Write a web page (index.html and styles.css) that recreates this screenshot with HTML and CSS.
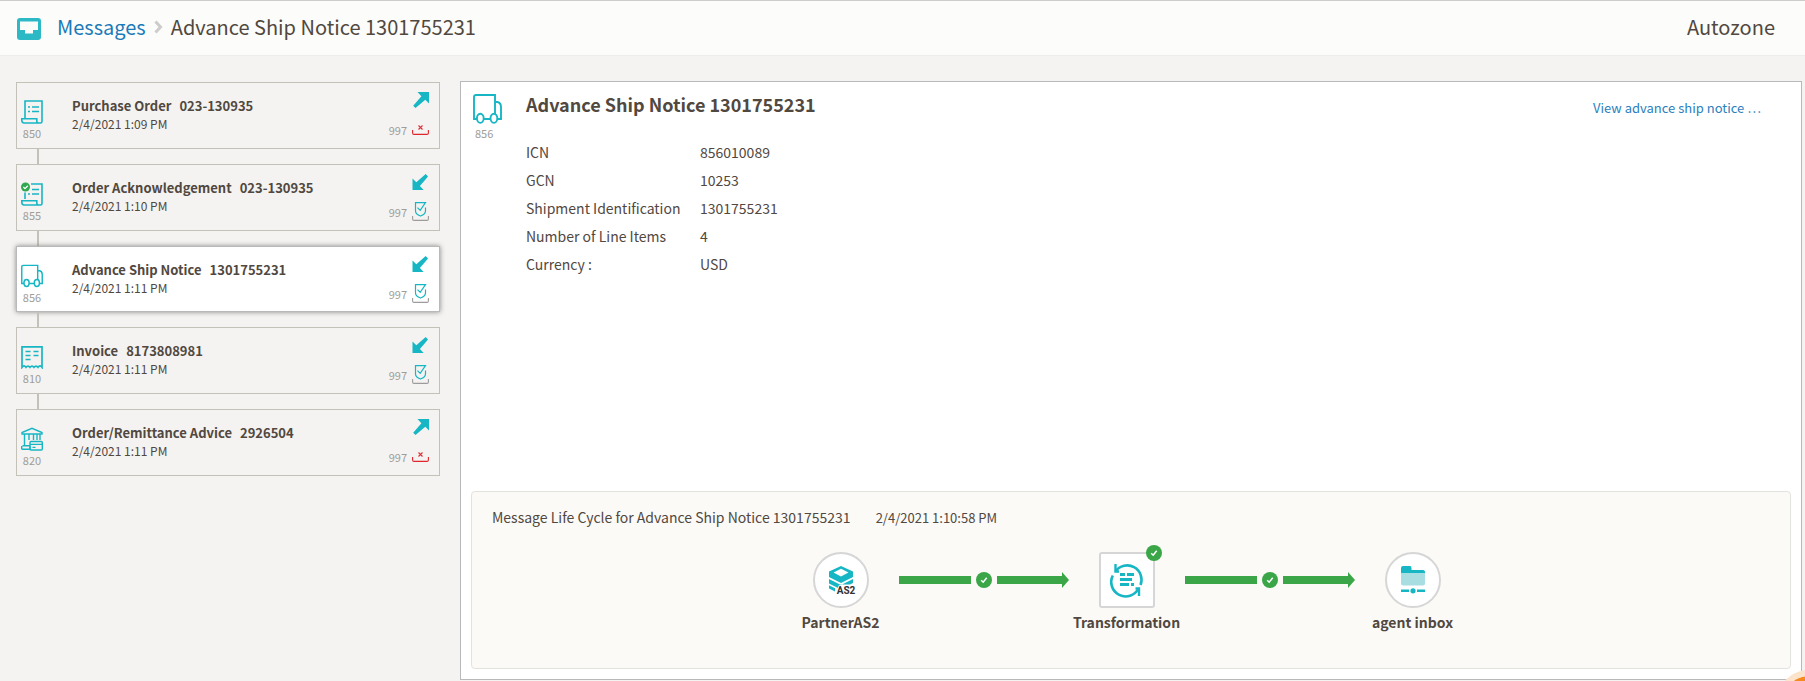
FILE: index.html
```html
<!DOCTYPE html>
<html lang="en">
<head>
<meta charset="utf-8">
<title>Advance Ship Notice 1301755231</title>
<link rel="stylesheet" href="styles.css">
</head>
<body>
<svg class="sprite" aria-hidden="true">
  <symbol id="doc" viewBox="0 0 22 24">
    <path d="M4 18V1h17v20.500q0 1.500-1.500 1.500H3q-2.200 0-2.200-3v-1.300h15V21q0 2 2 2" fill="none" stroke="currentColor" stroke-width="1.600"/>
    <path d="M7 7h2M11 7h7M7 11.500h2M11 11.500h7" stroke="currentColor" stroke-width="1.400"/>
  </symbol>
  <symbol id="doc-check" viewBox="0 0 22 24">
    <path d="M10 2h11v19.500q0 1.500-1.500 1.500H3q-2.200 0-2.200-3v-1.300h15V21q0 2 2 2M4 10.500V17" fill="none" stroke="currentColor" stroke-width="1.600"/>
    <path d="M11 7.500h7M7 12h2M11 12h7" stroke="currentColor" stroke-width="1.400"/>
    <circle cx="4.500" cy="5" r="4.500" fill="#2fa84f"/>
    <path d="M2.400 5l1.600 1.600L6.800 3.800" fill="none" stroke="#fff" stroke-width="1.300"/>
  </symbol>
  <symbol id="truck" viewBox="0 0 29 30">
    <path d="M4 25H1V3q0-2 2-2h19v24h-4.500M10.500 25h7M22 8h2.500q3.500 1 3.500 5v12h-3.500" fill="none" stroke="currentColor" stroke-width="1.900"/>
    <ellipse cx="7.300" cy="24.300" rx="3.400" ry="4.600" fill="#fff" stroke="currentColor" stroke-width="1.900"/>
    <ellipse cx="20.900" cy="24.300" rx="3.400" ry="4.600" fill="#fff" stroke="currentColor" stroke-width="1.900"/>
  </symbol>
  <symbol id="invoice" viewBox="0 0 22 24">
    <path d="M1 22.300V1.800h20v20.500q-2-3-4 0q-2-2.500-4 0q-2-2.500-4 0q-2-2.500-4 0q-2-3-4 0z" fill="none" stroke="currentColor" stroke-width="1.700"/>
    <path d="M4.500 6.500h5M12.500 6.500h5M4.500 10.500h5M12.500 10.500h5M4.500 14.500h5" stroke="currentColor" stroke-width="1.400"/>
  </symbol>
  <symbol id="bank" viewBox="0 0 22 24">
    <path d="M1 7V5.500L11 1.300l10 4.200V7zM3.500 7.500V18M8 7.500V13M12.500 7.500V13M16 7.500V13M19 7.500V13M9 18.700H1.500M.7 22.300H9V19M.7 19v3.300" fill="none" stroke="currentColor" stroke-width="1.400"/>
    <rect x="9" y="14.500" width="12.300" height="8.500" rx="1" fill="none" stroke="currentColor" stroke-width="1.400"/>
    <path d="M9 17.300h12.300M11.500 20.300h3" stroke="currentColor" stroke-width="1.300"/>
  </symbol>
  <symbol id="sent" viewBox="0 0 17 16">
    <path d="M5.500 0H17v11.500l-3.700-3.700L3.500 16 1.200 13.700 9.400 4.200z" fill="currentColor"/>
  </symbol>
  <symbol id="received" viewBox="0 0 17 16">
    <path d="M11.700 16H.5V4.500l3.800 3.700L13.700 0 16 2.600 7.900 12z" fill="currentColor"/>
  </symbol>
  <symbol id="rejected" viewBox="0 0 17 19">
    <path d="M6.500 5.500l4 4M10.500 5.500l-4 4" stroke="#dc2f37" stroke-width="1.100"/>
    <path d="M.6 10v3q0 1.400 1.400 1.400h13q1.400 0 1.400-1.400v-3" fill="none" stroke="#e0252d" stroke-width="1.100"/>
  </symbol>
  <symbol id="accepted" viewBox="0 0 17 19">
    <path d="M13.500 5.500V9q0 3.300-5 5-5-1.700-5-5V.7h10L8.200 8.400 5.500 5.600" fill="none" stroke="#17b6c4" stroke-width="1.200"/>
    <path d="M.6 14v3q0 1.400 1.400 1.400h13q1.400 0 1.400-1.400v-3" fill="none" stroke="#9c9c9c" stroke-width="1.100"/>
  </symbol>
  <symbol id="tick" viewBox="0 0 16 16">
    <circle cx="8" cy="8" r="8" fill="#3aa648"/>
    <path d="M5.200 8.200l2 2 3.500-4.500" fill="none" stroke="#fff" stroke-width="1.500"/>
  </symbol>
</svg>

<header class="topbar">
  <svg class="topbar-icon" viewBox="0 0 24 22" aria-hidden="true">
    <path fill-rule="evenodd" d="M3 0h18q3 0 3 3v16q0 3-3 3H3q-3 0-3-3V3q0-3 3-3zM3 3.500V12h5v3.500h8V12h5V3.500z" fill="#2db8c6"/>
  </svg>
  <nav class="crumbs">
    <a class="crumb-link" href="#">Messages</a>
    <svg class="crumb-arrow" viewBox="0 0 9 14" aria-hidden="true"><path d="M1.500 1.500L6.500 7l-5 5.500" fill="none" stroke="#ccc" stroke-width="3"/></svg>
    <span>Advance Ship Notice 1301755231</span>
  </nav>
  <span class="partner">Autozone</span>
</header>

<main class="content">
  <ul class="messages">
    <li><a class="card" href="#">
      <span class="kind"><svg class="kind-icon"><use href="#doc"/></svg>850</span>
      <span class="summary"><span class="name"><span>Purchase Order</span><span>023-130935</span></span><span class="date">2/4/2021 1:09 PM</span></span>
      <span class="state"><svg class="direction"><use href="#sent"/></svg><span class="ack">997<svg class="ack-icon"><use href="#rejected"/></svg></span></span>
    </a></li>
    <li><a class="card" href="#">
      <span class="kind"><svg class="kind-icon"><use href="#doc-check"/></svg>855</span>
      <span class="summary"><span class="name"><span>Order Acknowledgement</span><span>023-130935</span></span><span class="date">2/4/2021 1:10 PM</span></span>
      <span class="state"><svg class="direction"><use href="#received"/></svg><span class="ack">997<svg class="ack-icon"><use href="#accepted"/></svg></span></span>
    </a></li>
    <li><a class="card card-selected" href="#" aria-current="true">
      <span class="kind"><svg class="kind-icon"><use href="#truck"/></svg>856</span>
      <span class="summary"><span class="name"><span>Advance Ship Notice</span><span>1301755231</span></span><span class="date">2/4/2021 1:11 PM</span></span>
      <span class="state"><svg class="direction"><use href="#received"/></svg><span class="ack">997<svg class="ack-icon"><use href="#accepted"/></svg></span></span>
    </a></li>
    <li><a class="card" href="#">
      <span class="kind"><svg class="kind-icon"><use href="#invoice"/></svg>810</span>
      <span class="summary"><span class="name"><span>Invoice</span><span>8173808981</span></span><span class="date">2/4/2021 1:11 PM</span></span>
      <span class="state"><svg class="direction"><use href="#received"/></svg><span class="ack">997<svg class="ack-icon"><use href="#accepted"/></svg></span></span>
    </a></li>
    <li><a class="card" href="#">
      <span class="kind"><svg class="kind-icon"><use href="#bank"/></svg>820</span>
      <span class="summary"><span class="name"><span>Order/Remittance Advice</span><span>2926504</span></span><span class="date">2/4/2021 1:11 PM</span></span>
      <span class="state"><svg class="direction"><use href="#sent"/></svg><span class="ack">997<svg class="ack-icon"><use href="#rejected"/></svg></span></span>
    </a></li>
  </ul>

  <section class="panel">
    <div class="detail">
      <span class="detail-kind"><svg class="detail-icon"><use href="#truck"/></svg><span class="detail-code">856</span></span>
      <div class="detail-body">
        <h1 class="detail-title">Advance Ship Notice 1301755231</h1>
        <table class="facts">
          <tr><th scope="row">ICN</th><td>856010089</td></tr>
          <tr><th scope="row">GCN</th><td>10253</td></tr>
          <tr><th scope="row">Shipment Identification</th><td>1301755231</td></tr>
          <tr><th scope="row">Number of Line Items</th><td>4</td></tr>
          <tr><th scope="row">Currency :</th><td>USD</td></tr>
        </table>
      </div>
      <a class="view-link" href="#">View advance ship notice …</a>
    </div>

    <section class="cycle">
      <h2 class="cycle-title">Message Life Cycle for Advance Ship Notice 1301755231 <span class="cycle-date">2/4/2021 1:10:58 PM</span></h2>
      <div class="flow">
        <div class="node">
          <span class="badge badge-round">
            <svg class="node-icon" viewBox="0 0 32 32" aria-hidden="true">
              <path fill-rule="evenodd" d="M16 2l12 5.500V13l-12 6-12-6V7.500zM16 4.800L8.500 8.600 16 12.400l7.500-3.800z" fill="#17b6c4"/>
              <path d="M4 15l12 6 12-6v4l-3 1.500H15L13 24 4 19.500zM4 21.300l6 3v3.200l-6-3z" fill="#17b6c4"/>
              <text class="as2" x="21" y="30" text-anchor="middle">AS2</text>
            </svg>
          </span>
          <span class="node-name">PartnerAS2</span>
        </div>
        <div class="arrow"><span class="bar bar-start"></span><svg class="tick"><use href="#tick"/></svg><span class="bar"></span><span class="head"></span></div>
        <div class="node">
          <span class="badge">
            <svg class="node-icon" viewBox="0 0 32 32" aria-hidden="true">
              <path d="M4.500 7.500A14.300 14.300 0 0 1 29.500 21M27.500 24.500A14.300 14.300 0 0 1 1.800 11.500" fill="none" stroke="#17b6c4" stroke-width="2.600"/>
              <path d="M4.500 0v7.500H8M28 32v-7.500h-3.500" fill="none" stroke="#17b6c4" stroke-width="2.400"/>
              <path d="M9 10.500h5M16 10.500h7M9 15.500h12M9 20.500h9M20 20.500h3" stroke="#17b6c4" stroke-width="3"/>
            </svg>
            <svg class="tick tick-corner"><use href="#tick"/></svg>
          </span>
          <span class="node-name">Transformation</span>
        </div>
        <div class="arrow"><span class="bar bar-start"></span><svg class="tick"><use href="#tick"/></svg><span class="bar"></span><span class="head"></span></div>
        <div class="node">
          <span class="badge badge-round">
            <svg class="node-icon" viewBox="0 0 32 32" aria-hidden="true">
              <path d="M4 9h24v10.500q0 2-2 2H6q-2 0-2-2z" fill="#a8dde2"/>
              <path d="M4 9V4q0-2 2-2h7q1.500 0 1.500 2v2H26q2 0 2 2v1z" fill="#17b6c4"/>
              <path d="M4 26.800h8M20 26.800h8" stroke="#17b6c4" stroke-width="2.400"/>
              <circle cx="16" cy="26.800" r="2.600" fill="#17b6c4"/>
            </svg>
          </span>
          <span class="node-name">agent inbox</span>
        </div>
      </div>
    </section>
  </section>
</main>
<button class="help" type="button" aria-label="Help"></button>
</body>
</html>
```

FILE: styles.css
```css
* { box-sizing: border-box; }

body {
  margin: 0;
  min-height: 100vh;
  display: flex;
  flex-direction: column;
  background: #f4f3f1;
  color: #51483f;
  font-family: "Noto Sans CJK SC", "Open Sans", sans-serif;
  font-size: 14px;
  line-height: 20px;
}

a { color: inherit; text-decoration: none; }
svg { display: block; flex: none; }
.sprite { position: absolute; width: 0; height: 0; }

.topbar {
  display: flex;
  align-items: center;
  height: 56px;
  padding: 0 30px 0 17px;
  background: #fcfcfa;
  border-top: 1px solid #ccc;
  border-bottom: 1px solid #ececea;
  font-size: 20px;
  line-height: 28px;
}
.topbar-icon { width: 24px; height: 22px; margin-top: 2px; }
.crumbs { display: flex; align-items: center; gap: 8px; margin-left: 16px; }
.crumbs, .partner { padding-bottom: 2px; }
.crumb-link { color: #1b7ab8; }
.crumb-arrow { width: 9px; height: 14px; }
.partner { margin-left: auto; }

.content {
  flex: 1;
  display: grid;
  grid-template-columns: 424px 1fr;
  gap: 20px;
  padding: 25px 3px 0 16px;
}

.messages {
  display: flex;
  flex-direction: column;
  gap: 15px;
  margin: 0;
  padding: 1px 0 0;
  list-style: none;
}
.messages li + li { position: relative; }
.messages li + li::before {
  content: "";
  position: absolute;
  left: 21px;
  bottom: 100%;
  width: 2px;
  height: 15px;
  background: #c3c1b8;
}
.card {
  position: relative;
  display: flex;
  height: 67px;
  padding: 0 10px 0 4px;
  border: 1px solid #c3c1b8;
}
.card-selected {
  height: 66px;
  background: #fff;
  border-color: #b9b9b9;
  box-shadow: 0 0 5px #888;
}
.kind {
  display: flex;
  flex-direction: column;
  align-items: center;
  width: 22px;
  padding-top: 17px;
  color: #a09d98;
  font-size: 11px;
  line-height: 18px;
}
.kind-icon { width: 22px; height: 24px; color: #17b6c4; }
.summary {
  flex: 1;
  display: flex;
  flex-direction: column;
  padding: 13px 0 0 29px;
}
.name { display: flex; gap: 8px; font-weight: 700; font-size: 13px; }
.date { font-size: 12px; line-height: 16px; }
.state {
  display: flex;
  flex-direction: column;
  align-items: flex-end;
  gap: 12px;
  padding-top: 9px;
}
.direction { width: 17px; height: 16px; color: #17b6c4; }
.ack { display: flex; gap: 5px; color: #a09d98; font-size: 11px; }
.ack-icon { width: 17px; height: 19px; }

.panel {
  display: flex;
  flex-direction: column;
  justify-content: space-between;
  margin-bottom: 1px;
  padding: 12px 10px 10px;
  background: #fff;
  border: 1px solid #b9b9b9;
}
.detail { display: flex; padding-right: 30px; }
.detail-kind {
  display: flex;
  flex-direction: column;
  width: 55px;
  padding-left: 2px;
  color: #a09d98;
  font-size: 11px;
  line-height: 18px;
}
.detail-code { padding-left: 2px; }
.detail-icon { width: 29px; height: 30px; color: #17b6c4; }
.detail-title { margin: 0 0 24px; font-size: 18px; line-height: 20px; }
.facts { border-collapse: collapse; font-size: 14px; line-height: 28px; }
.facts th { width: 174px; padding: 0; font-weight: 400; text-align: left; }
.facts td { padding: 0; }
.view-link { margin: 4px 0 0 auto; color: #2b80bd; font-size: 13px; }

.cycle {
  height: 178px;
  padding: 15px 20px;
  background: #fbfaf7;
  border: 1px solid #e2e2df;
  border-radius: 4px;
}
.cycle-title { margin: 0; font-size: 14px; font-weight: 400; }
.cycle-date { margin-left: 22px; font-size: 13px; }
.flow { display: flex; justify-content: center; padding: 24px 9px 0 0; }
.node { display: flex; flex-direction: column; align-items: center; gap: 4px; width: 116px; }
.badge {
  position: relative;
  display: grid;
  place-items: center;
  width: 56px;
  height: 56px;
  background: #fff;
  border: 2px solid #d6d6d6;
  border-radius: 3px;
}
.badge-round { border-radius: 50%; }
.node-icon { width: 32px; height: 32px; overflow: visible; }
.as2 {
  font: 700 10px Roboto, sans-serif;
  fill: #333;
  stroke: #fff;
  stroke-width: 2px;
  paint-order: stroke;
}
.node-name { font-weight: 700; white-space: nowrap; }
.arrow { display: flex; align-items: center; width: 170px; height: 56px; }
.bar { flex: 1; height: 8px; background: #3aa648; }
.bar-start { flex: 0 0 72px; }
.head { border-left: 7px solid #3aa648; border-top: 8px solid transparent; border-bottom: 8px solid transparent; }
.tick { width: 16px; height: 16px; margin: 0 5px; }
.tick-corner { position: absolute; top: -9px; right: -9px; margin: 0; }

.help {
  position: fixed;
  right: -37px;
  bottom: -55px;
  width: 66px;
  height: 66px;
  padding: 0;
  background: #f58a1f;
  background-clip: padding-box;
  border: 6px solid #fbe3cc;
  border-radius: 50%;
}
```
